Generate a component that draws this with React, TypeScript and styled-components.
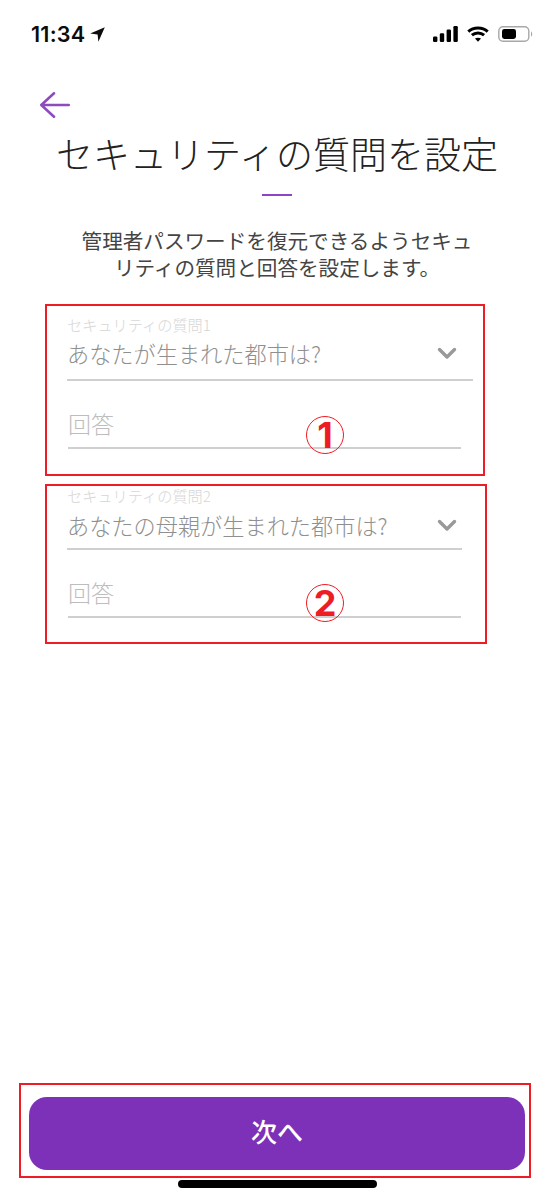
import { createGlobalStyle, styled } from 'styled-components';

const GlobalStyle = createGlobalStyle`
  html, body {
    margin: 0;
    padding: 0;
    background: #fff;
  }
  body {
    font-family: "Noto Sans CJK JP", "Noto Sans", sans-serif;
  }
`;

const Screen = styled.div`
  position: relative;
  width: 554px;
  height: 1200px;
  overflow: hidden;
  background: #fff;
  display: flex;
  flex-direction: column;
`;

const StatusBar = styled.div`
  height: 24px;
  margin-top: 22px;
  padding: 0 21px 0 31px;
  display: flex;
  align-items: center;
  justify-content: space-between;
`;

const Time = styled.div`
  display: flex;
  align-items: center;
  gap: 5px;
  font-family: Inter, "Liberation Sans", sans-serif;
  font-size: 21.6px;
  font-weight: 600;
  letter-spacing: 0.2px;
  color: #0c0c0c;
`;

const StatusIcons = styled.div`
  display: flex;
  align-items: center;
  gap: 9px;
`;

const BackButton = styled.button`
  align-self: flex-start;
  margin: 46px 0 0 40px;
  padding: 0;
  width: 30px;
  height: 26px;
  border: 0;
  background: none;
  display: flex;
`;

const Title = styled.h1`
  margin: 8px 0 0;
  font-size: 37px;
  line-height: 54px;
  font-weight: 300;
  text-align: center;
  color: #222;
`;

const TitleRule = styled.div`
  align-self: center;
  width: 30px;
  height: 2px;
  margin-top: 14px;
  background: #8e44c7;
`;

const Description = styled.p`
  margin: 31px auto 0;
  width: 400px;
  font-size: 20.6px;
  line-height: 27px;
  font-weight: 400;
  text-align: center;
  color: #444;
`;

const Form = styled.div`
  margin: 34px 0 0 67px;
  display: flex;
  flex-direction: column;
  gap: 37px;
`;

const QuestionLabel = styled.div`
  height: 22px;
  font-size: 15.2px;
  line-height: 18px;
  font-weight: 300;
  color: #d6d6d6;
`;

const SelectRow = styled.div<{ $width: number; $height: number; $pad: number }>`
  width: ${({ $width }) => $width}px;
  height: ${({ $height }) => $height}px;
  padding-bottom: ${({ $pad }) => $pad}px;
  padding-right: ${({ $width }) => $width - 390}px;
  box-sizing: border-box;
  display: flex;
  align-items: center;
  justify-content: space-between;
  border-bottom: 2px solid #cfcfcf;
  font-size: 22.2px;
  font-weight: 300;
  color: #8f8f8f;
`;

const AnswerRow = styled.div`
  width: 393px;
  height: 68px;
  margin-left: 1px;
  box-sizing: border-box;
  padding-top: 27px;
  border-bottom: 2px solid #cfcfcf;
  font-size: 23px;
  line-height: 30px;
  font-weight: 300;
  color: #bdbdbd;
`;

const Footer = styled.div`
  margin-top: auto;
  padding: 0 29px 30px;
`;

const NextButton = styled.button`
  display: block;
  width: 100%;
  height: 73px;
  padding: 0 0 6px;
  border: 0;
  border-radius: 18px;
  background: #7d30b8;
  color: #fff;
  font-family: inherit;
  font-size: 26px;
  font-weight: 500;
`;

const HomeBar = styled.div`
  position: absolute;
  left: 178px;
  bottom: 12px;
  width: 199px;
  height: 8px;
  border-radius: 4px;
  background: #000;
`;

/* red boxes the author of the screenshot drew over the app */
const Callout = styled.div<{ $x: number; $y: number; $w: number; $h: number }>`
  position: absolute;
  left: ${({ $x }) => $x}px;
  top: ${({ $y }) => $y}px;
  width: ${({ $w }) => $w}px;
  height: ${({ $h }) => $h}px;
  box-sizing: border-box;
  border: 2.5px solid #ee1c25;
`;

const CalloutNumber = styled.div<{ $y: number }>`
  position: absolute;
  left: 306px;
  top: ${({ $y }) => $y}px;
  width: 38px;
  height: 38px;
  box-sizing: border-box;
  border: 1.5px solid #ee1c25;
  border-radius: 50%;
  display: flex;
  align-items: center;
  justify-content: center;
  font-family: Inter, "Liberation Sans", sans-serif;
  font-size: 36px;
  font-weight: 700;
  line-height: 1;
  color: #ee1c25;
`;

const ChevronIcon = () => (
  <svg width="20" height="13" viewBox="0 0 20 13" fill="none">
    <path d="M2.5 2.5 L10 10 L17.5 2.5" stroke="#999" strokeWidth="3.4" strokeLinecap="round" strokeLinejoin="round" />
  </svg>
);

const BackArrow = () => (
  <svg width="30" height="26" viewBox="0 0 30 26" fill="none">
    <path d="M28.8 13 H2 M14 1.3 L1.3 13 L14 24.7" stroke="#8e4bc0" strokeWidth="2.6" strokeLinecap="round" strokeLinejoin="round" />
  </svg>
);

const LocationArrow = () => (
  <svg width="15" height="15" viewBox="0 0 15 15">
    <path d="M14.8 0.2 L0.2 6.6 L7.6 7.4 L8.4 14.8 Z" fill="#0c0c0c" />
  </svg>
);

const SignalIcon = () => (
  <svg width="25" height="16" viewBox="0 0 25 16" fill="#000">
    <rect x="0" y="10.5" width="4.4" height="5.5" rx="1.2" />
    <rect x="6.8" y="7.2" width="4.4" height="8.8" rx="1.2" />
    <rect x="13.6" y="3.6" width="4.4" height="12.4" rx="1.2" />
    <rect x="20.4" y="0" width="4.4" height="16" rx="1.2" />
  </svg>
);

const WifiIcon = () => (
  <svg width="22" height="16" viewBox="0 0 22 16" fill="none" stroke="#000" strokeWidth="3">
    <path d="M1.3 5.6 C6.6 0.8 15.4 0.8 20.7 5.6" />
    <path d="M4.9 9.2 C8.4 6.1 13.6 6.1 17.1 9.2" />
    <path d="M11 15.8 L8 12.6 C9.8 11.3 12.2 11.3 14 12.6 Z" fill="#000" stroke="none" />
  </svg>
);

const BatteryIcon = () => (
  <svg width="35" height="16" viewBox="0 0 35 16" fill="none">
    <rect x="0.8" y="0.8" width="30" height="14.4" rx="4.2" stroke="#a8a8a8" strokeWidth="1.4" />
    <rect x="4" y="3" width="14" height="10" rx="2.4" fill="#000" />
    <path d="M33 5.4 C34.6 6 34.6 10 33 10.6 Z" fill="#a8a8a8" />
  </svg>
);

const questions = [
  { label: 'セキュリティの質問1', value: 'あなたが生まれた都市は?', width: 406, height: 44, pad: 10 },
  { label: 'セキュリティの質問2', value: 'あなたの母親が生まれた都市は?', width: 395, height: 42, pad: 6 },
];

const App = () => (
  <Screen>
    <GlobalStyle />
    <StatusBar>
      <Time>
        11:34
        <LocationArrow />
      </Time>
      <StatusIcons>
        <SignalIcon />
        <WifiIcon />
        <BatteryIcon />
      </StatusIcons>
    </StatusBar>

    <BackButton aria-label="戻る">
      <BackArrow />
    </BackButton>
    <Title>セキュリティの質問を設定</Title>
    <TitleRule />
    <Description>管理者パスワードを復元できるようセキュリティの質問と回答を設定します。</Description>

    <Form>
      {questions.map((q) => (
        <div key={q.label}>
          <QuestionLabel>{q.label}</QuestionLabel>
          <SelectRow $width={q.width} $height={q.height} $pad={q.pad}>
            {q.value}
            <ChevronIcon />
          </SelectRow>
          <AnswerRow>回答</AnswerRow>
        </div>
      ))}
    </Form>

    <Footer>
      <NextButton>次へ</NextButton>
    </Footer>
    <HomeBar />

    <Callout $x={45} $y={304} $w={440} $h={172} />
    <Callout $x={45} $y={484} $w={442} $h={160} />
    <Callout $x={19} $y={1083} $w={512} $h={95} />
    <CalloutNumber $y={416}>1</CalloutNumber>
    <CalloutNumber $y={584}>2</CalloutNumber>
  </Screen>
);

export default App;
